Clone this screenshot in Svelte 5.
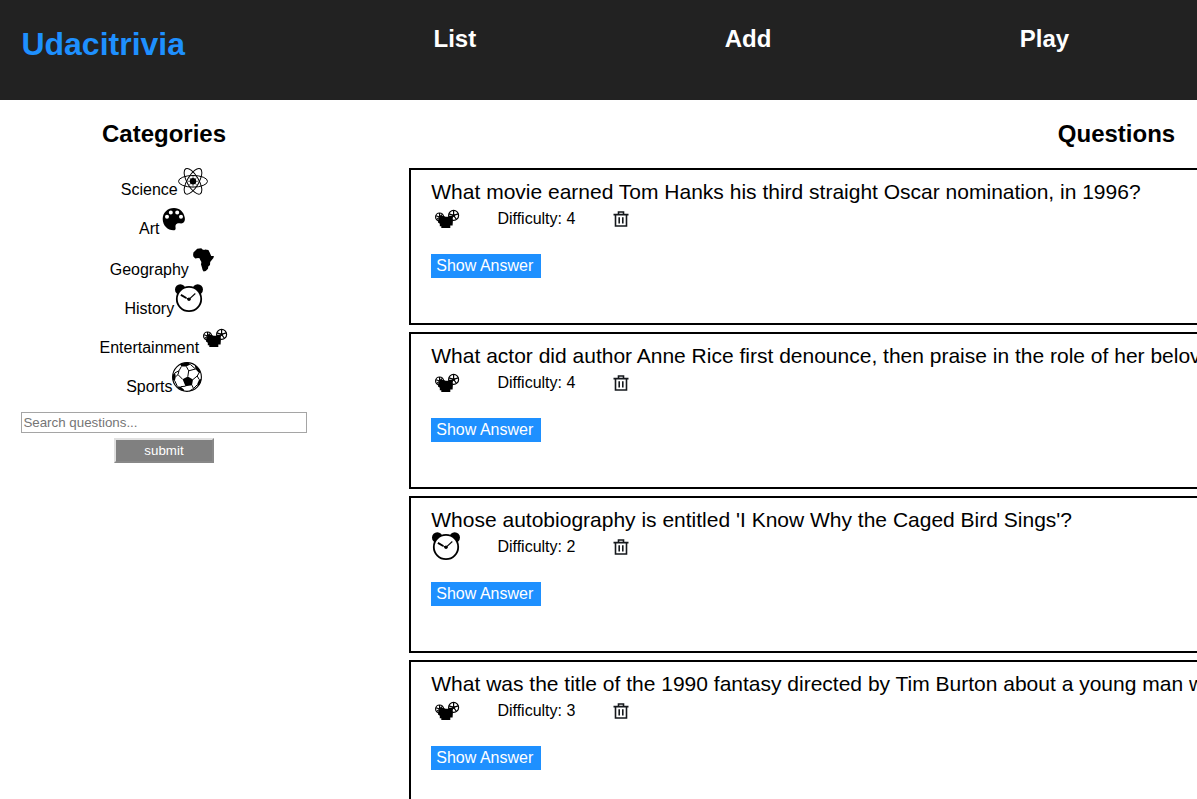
<script>
  const nav = ['List', 'Add', 'Play'];
  const categories = [
    { name: 'Science', icon: 'science' },
    { name: 'Art', icon: 'art' },
    { name: 'Geography', icon: 'geography' },
    { name: 'History', icon: 'history' },
    { name: 'Entertainment', icon: 'entertainment' },
    { name: 'Sports', icon: 'sports' }
  ];
  const questions = [
    { text: 'What movie earned Tom Hanks his third straight Oscar nomination, in 1996?', icon: 'entertainment', difficulty: 4 },
    { text: 'What actor did author Anne Rice first denounce, then praise in the role of her beloved Lestat?', icon: 'entertainment', difficulty: 4 },
    { text: "Whose autobiography is entitled 'I Know Why the Caged Bird Sings'?", icon: 'history', difficulty: 2 },
    { text: 'What was the title of the 1990 fantasy directed by Tim Burton about a young man with multi-bladed appendages?', icon: 'entertainment', difficulty: 3 }
  ];
</script>

{#snippet glyph(name)}
  <svg class="glyph" viewBox="0 0 30 30" aria-hidden="true">
    {#if name === 'science'}
      <g fill="none" stroke="#000" stroke-width="1">
        <ellipse cx="15" cy="16.300" rx="14.500" ry="5.800" />
        <ellipse cx="15" cy="16.300" rx="14.500" ry="5.800" transform="rotate(60 15 16.3)" />
        <ellipse cx="15" cy="16.300" rx="14.500" ry="5.800" transform="rotate(120 15 16.3)" />
        <path d="M15 11v10.600M9.700 16.300h10.600M11.300 12.600l7.400 7.400M18.700 12.600l-7.400 7.400" stroke-width=".6" />
      </g>
      <circle cx="15" cy="16.300" r="3.200" />
    {:else if name === 'art'}
      <path fill-rule="evenodd" d="M14 4C7.500 4 2.700 8.700 2.700 15c0 6.500 5 11.300 10.700 11.300 1.700 0 2.400-.9 2.200-2.300-.3-2.100-.3-3.900 1.700-4.500 2-.6 4.100.7 6-.7 1.500-1.100 1.800-3 1.500-5C24 8 19.700 4 14 4ZM7 10.800a2 2 0 1 0 0 4 2 2 0 0 0 0-4ZM10.800 6.400a2 2 0 1 0 0 4 2 2 0 0 0 0-4ZM17.200 6.400a2 2 0 1 0 0 4 2 2 0 0 0 0-4ZM21 10.800a2 2 0 1 0 0 4 2 2 0 0 0 0-4Z" />
    {:else if name === 'geography'}
      <path d="M8.200 3.700l4.200-.5.700 1.100 2 .8 1-.7 3.300.6 1.300 2.500 1.500 3.400 2.700.2-.5 2-3.200 3.800-.2 3-1.700 1.600-.3 2.300-2.200 2.300-2.200.5-1-1.500-.8-3.200-.8-2.400.4-2.400-1.300-2.300-.3-1.300-1.600-.5-2.900.4-1.800-1.700-.4-1.800.3-2.400 1.800-1.800Z" />
    {:else if name === 'history'}
      <circle cx="6.300" cy="5.600" r="5.300" />
      <circle cx="23.700" cy="5.600" r="5.300" />
      <circle cx="15" cy="15" r="12.200" fill="#fff" stroke="#000" stroke-width="1.800" />
      <path d="M6.900 10.900l5.300 3.100" stroke="#000" stroke-width="2" />
      <path d="M11 13.300l4 2" stroke="#000" stroke-width="1" />
      <path d="M15 15.300l6.300-5.800" stroke="#000" stroke-width="1.100" />
      <circle cx="15" cy="15.300" r="1.700" />
    {:else if name === 'entertainment'}
      <path d="M9.200 12h3.800l1.500.8h2.500l1.500-1h3l.4 5-.3 4.700h-2.300v2.500h-9v-1.800H8.800v-2.500L7 18.500l.2-3Z" />
      <g fill="none" stroke="#000" stroke-width="1.200">
        <circle cx="8.600" cy="13" r="4" />
        <circle cx="22.600" cy="11.400" r="5" />
        <path d="M8.600 13V9M8.600 13L5 11.800M8.600 13l-3 2.600M8.600 13l3-2.700M22.600 11.400V6.500M22.600 11.400l4.600-1.500M22.600 11.400l2.900 4.100M22.600 11.400l-2.900 4.100M22.600 11.400l-4.600-1.500" />
      </g>
      <circle cx="22.600" cy="11.400" r="1.300" />
    {:else}
      <circle cx="15" cy="15" r="14.400" fill="#fff" stroke="#000" stroke-width="1.100" />
      <path d="M10.600 17.300l5.200-2.700 5.200 2.900-1 5.700-6.500 1Z" />
      <path d="M8.200 2.300C10.500.9 13.500.4 16.800.8l1.500 1.600-4 2-5 .2ZM22.800 3c2.800 1.800 4.800 4.400 5.800 7.700l-1.600.3-3.500-4ZM1 12.500l2-2 .8 4.200-1 4.200-1.900-.7C.4 16.200.5 14.500 1 12.500ZM29.300 17c-.4 3-1.700 5.700-3.700 7.700l-.2-3.200 1.800-4ZM5 24.200l3.700.5 3.200 2.700.4 1.800C9.500 28.600 7 27 5 24.200Z" />
      <path d="M9.300 4.600L7 8.800l-4 2M14.300 4.400l2.400 4.400-.9 5.800M18.300 2.400l5.200 4.600M16.700 8.800l6.800-1.800M7 8.800l-1 3.800 4.600 4.700M6 12.600l-2.200 2M21 17.500l4.200-3.500 1.800-3M25.200 14l2 3.500M2.800 18.900l2.500 5.300M13.500 24.200l-4.800.5M20 23.200l1.500 3.300-4 2.500M21.500 26.500l4-4" fill="none" stroke="#000" stroke-width="1" />
    {/if}
  </svg>
{/snippet}

<header>
  <h1>Udacitrivia</h1>
  {#each nav as item}<h2>{item}</h2>{/each}
</header>

<main>
  <aside>
    <h2>Categories</h2>
    <ul>
      {#each categories as category}
        <li class={category.icon}><span>{category.name}</span>{@render glyph(category.icon)}</li>
      {/each}
    </ul>
    <form onsubmit={(event) => event.preventDefault()}>
      <input type="text" placeholder="Search questions..." />
      <button type="submit">submit</button>
    </form>
  </aside>

  <section>
    <h2>Questions</h2>
    {#each questions as question}
      <article>
        <div class="question">{question.text}</div>
        <div class="status">
          {@render glyph(question.icon)}
          <span class="difficulty">Difficulty: {question.difficulty}</span>
          <svg class="trash" viewBox="0 0 16 16" aria-hidden="true">
            <path d="M.5 3.600h15M5.500 3.300V1h5v2.300M2.500 4v11h11V4M6.200 6.200v6.200M9.800 6.200v6.200" fill="none" stroke="#15181c" stroke-width="1.600" />
          </svg>
        </div>
        <div class="answer">Show Answer</div>
      </article>
    {/each}
  </section>
</main>

<style>
  :global(body) {
    margin: 0;
    overflow: hidden;
    background: #fff;
  }
  :global(#app) {
    height: 799px;
    overflow: hidden;
    font-family: "Liberation Sans", Arial, sans-serif;
    font-size: 16px;
    color: #000;
  }
  h1, h2, ul {
    margin: 0;
    padding: 0;
  }
  h2 {
    font-size: 24px;
    line-height: 28px;
  }
  header {
    display: flex;
    gap: 248.500px;
    box-sizing: border-box;
    height: 100px;
    padding: 25px 21.400px;
    background: #222;
    color: #fff;
  }
  header h1 {
    font-size: 32px;
    line-height: 38px;
    color: dodgerblue;
  }
  main {
    display: flex;
  }
  aside {
    flex: none;
    width: 286px;
    padding: 20px 102px 0 21px;
    text-align: center;
  }
  ul {
    list-style: none;
    padding: 17px 0 0 0.600px;
  }
  li {
    display: flex;
    justify-content: center;
    align-items: flex-end;
    height: 30px;
    padding-bottom: 9px;
  }
  li.geography {
    padding-top: 2px;
  }
  li span {
    line-height: 18px;
    margin-bottom: -4px;
  }
  .glyph {
    display: block;
    flex: none;
    width: 30px;
    height: 30px;
  }
  form {
    display: flex;
    flex-direction: column;
    align-items: center;
    gap: 5px;
    padding-top: 11px;
  }
  input {
    box-sizing: border-box;
    width: 286px;
    height: 21px;
    padding: 1px 1px 1px 1.400px;
    border: 1px solid #a5a5a5;
    font: 13.333px "Liberation Sans", Arial, sans-serif;
  }
  input::placeholder {
    color: #757575;
  }
  button {
    box-sizing: border-box;
    width: 100px;
    height: 25px;
    padding: 0;
    border: 2px solid;
    border-color: #e0e0e0 #888 #888 #e0e0e0;
    background: gray;
    color: #fff;
    font: 13.333px "Liberation Sans", Arial, sans-serif;
  }
  section {
    flex: none;
    width: 1415px;
    padding-top: 20px;
  }
  section h2 {
    margin-bottom: 20px;
    text-align: center;
  }
  article {
    box-sizing: border-box;
    height: 157px;
    margin-bottom: 7px;
    padding: 10px 20px;
    border: 2px solid #000;
  }
  .question {
    padding-left: 0.300px;
    font-size: 21px;
    line-height: 24px;
    white-space: nowrap;
  }
  .status {
    display: flex;
    height: 30px;
  }
  .difficulty {
    width: 115.600px;
    padding: 6px 0 0 36.400px;
    line-height: 18px;
  }
  .trash {
    width: 16px;
    height: 16px;
    padding-top: 7px;
  }
  .answer {
    box-sizing: border-box;
    width: 110px;
    height: 24px;
    margin-top: 20px;
    padding-left: 5.300px;
    line-height: 23px;
    background: dodgerblue;
    color: #fff;
  }
</style>
